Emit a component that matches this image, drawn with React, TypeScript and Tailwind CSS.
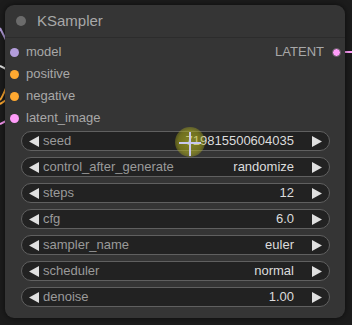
import React from 'react';

const inputs = [
  { name: 'model', color: 'bg-[#b39ddb]' },
  { name: 'positive', color: 'bg-[#ffa931]' },
  { name: 'negative', color: 'bg-[#ffa931]' },
  { name: 'latent_image', color: 'bg-[#ff9cf9]' },
];

const widgets = [
  { name: 'seed', value: '719815500604035' },
  { name: 'control_after_generate', value: 'randomize' },
  { name: 'steps', value: '12' },
  { name: 'cfg', value: '6.0' },
  { name: 'sampler_name', value: 'euler' },
  { name: 'scheduler', value: 'normal' },
  { name: 'denoise', value: '1.00' },
];

const Arrow = ({ dir }: { dir: 'left' | 'right' }) => (
  <svg width="10" height="11" viewBox="0 0 10 11" className="shrink-0">
    {dir === 'left' ? (
      <polygon points="10,0 10,11 0,5.5" fill="#e0e0e0" />
    ) : (
      <polygon points="0,0 0,11 10,5.5" fill="#e0e0e0" />
    )}
  </svg>
);

const App = () => {
  return (
    <div
      className="relative w-[352px] h-[325px] overflow-hidden bg-[#1c1c1c] pt-[5px] pl-[5px]"
      style={{ fontFamily: '"Liberation Sans", Arial, sans-serif' }}
    >
      {/* wires coming in from the left */}
      <svg className="absolute left-0 top-0" width="20" height="130" viewBox="0 0 20 130">
        <path d="M0 28 C4 36 8 44 12 52" stroke="#b39ddb" strokeWidth="2" fill="none" />
        <path d="M0 66 C4 68 8 70 12 72" stroke="#e8e8e8" strokeWidth="2" fill="none" />
        <path d="M0 100 C4 96 8 80 12 76" stroke="#ffa931" strokeWidth="2" fill="none" />
        <path d="M0 104 C4 102 8 98 12 96" stroke="#ffa931" strokeWidth="2" fill="none" />
        <path d="M0 124 C4 122 8 120 12 118" stroke="#ff9cf9" strokeWidth="2" fill="none" />
      </svg>
      <div className="absolute right-0 top-[51px] w-[10px] h-[2px] bg-[#ff9cf9]" />

      <div className="relative w-[340px] h-[313px] rounded-[9px] bg-[#353535] shadow-[0_0_6px_rgba(0,0,0,0.6)]">
        {/* title */}
        <div className="flex items-center h-[33px] border-b border-[#2c2c2c] pl-[11px] gap-[11px]">
          <div className="w-[10px] h-[10px] rounded-full bg-[#6b6b6b]" />
          <span className="text-[15px] text-[#a8a8a8]">KSampler</span>
        </div>

        {/* slots */}
        <div className="relative pt-[3px]">
          {inputs.map((inp) => (
            <div key={inp.name} className="flex items-center h-[22px] pl-[5px] gap-[7px]">
              <div className={`w-[9px] h-[9px] rounded-full ${inp.color}`} />
              <span className="text-[13px] text-[#a8a8a8]">{inp.name}</span>
            </div>
          ))}
          <div className="absolute right-[4px] top-[3px] flex items-center h-[22px] gap-[8px]">
            <span className="text-[13px] text-[#a8a8a8]">LATENT</span>
            <div className="w-[9px] h-[9px] rounded-full bg-[#ff9cf9] border border-[#555]" />
          </div>
        </div>

        {/* widgets */}
        <div className="flex flex-col gap-[6px] mt-[2px] ml-[16px] w-[309px]">
          {widgets.map((w) => (
            <div
              key={w.name}
              className="flex items-center h-[20px] rounded-full border border-[#606060] bg-[#222222] pl-[7px] pr-[7px]"
            >
              <Arrow dir="left" />
              <span className="ml-[4px] text-[13px] text-[#9a9a9a]">{w.name}</span>
              <span className="ml-auto mr-[18px] text-[13px] text-[#dcdcdc]">{w.value}</span>
              <Arrow dir="right" />
            </div>
          ))}
        </div>
      </div>

      {/* cursor */}
      <div className="absolute left-[175px] top-[127px] w-[30px] h-[30px] rounded-full bg-[radial-gradient(circle,rgba(200,200,40,0.6)_0%,rgba(175,175,30,0.55)_55%,rgba(150,150,20,0)_100%)]" />
      <svg className="absolute left-[176px] top-[130px]" width="28" height="28" viewBox="0 0 28 28">
        <line x1="14" y1="2" x2="14" y2="26" stroke="#c8c8f0" strokeWidth="2" />
        <line x1="3" y1="13" x2="25" y2="13" stroke="#c8c8f0" strokeWidth="2" />
      </svg>
    </div>
  );
};

export default App;
